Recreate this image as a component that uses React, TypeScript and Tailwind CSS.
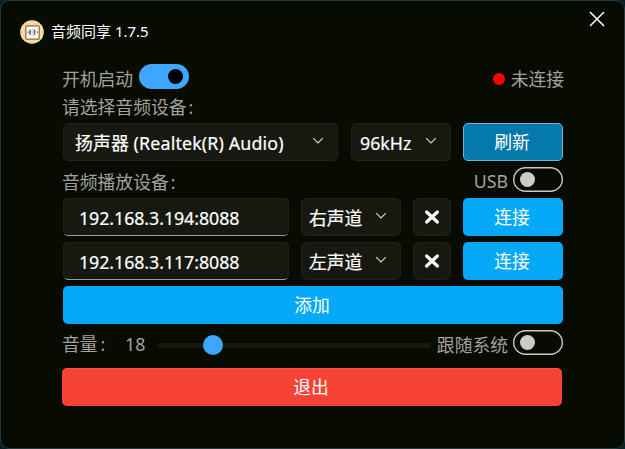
import React from "react";

function Chevron({ className = "" }: { className?: string }) {
  return (
    <svg className={`shrink-0 ${className}`} width="12" height="8" viewBox="0 0 12 8" fill="none" stroke="#d4d4d0" strokeWidth="1.2">
      <path d="M1.2 1.2 L6 6 L10.8 1.2" />
    </svg>
  );
}

function Toggle({ on = false }: { on?: boolean }) {
  return on ? (
    <div className="flex h-[25px] w-[50px] shrink-0 items-center justify-end rounded-full bg-[#3ea6ff] pr-1.5">
      <div className="size-[15px] rounded-full bg-black" />
    </div>
  ) : (
    <div className="flex h-[25px] w-[50px] shrink-0 items-center rounded-full pl-[7px] shadow-[inset_0_0_0_1.4px_#c9c9c6]">
      <div className="size-[15px] rounded-full bg-[#cbcbc9]" />
    </div>
  );
}

function Select({ label, className }: { label: string; className: string }) {
  return (
    <div className={`flex h-[38px] shrink-0 justify-between rounded-[5px] border border-[#1f211a] bg-[#171911] pt-[7px] text-white [-webkit-text-stroke:0.2px_white] ${className}`}>
      <span className="whitespace-nowrap leading-6">{label}</span>
      <Chevron className="mt-[6px]" />
    </div>
  );
}

function Device({ address, channel }: { address: string; channel: string }) {
  return (
    <div className="mb-1.5 flex h-[38px]">
      <div className="h-[38px] w-[226px] rounded-[5px] border border-[#1f211a] border-b-[#9a9c95] bg-[#171911] pl-[15px] pt-[7px] leading-6 tracking-[-0.06px] text-white [-webkit-text-stroke:0.2px_white]">
        {address}
      </div>
      <Select label={channel} className="ml-3 w-[100px] pl-[7px] pr-[13px]" />
      <div className="ml-3 flex h-[38px] w-[38px] items-center justify-center rounded-[5px] border border-[#1f211a] bg-[#171911]">
        <svg width="16" height="16" viewBox="0 0 16 16" stroke="white" strokeWidth="3.2" strokeLinecap="round">
          <path d="M2.6 3 L13.4 13 M13.4 3 L2.6 13" />
        </svg>
      </div>
      <div className="ml-3 flex h-[38px] w-[100px] items-center justify-center rounded-[5px] bg-[#05a9f7] pr-0.5 text-white">连接</div>
    </div>
  );
}

export default function App() {
  return (
    <div className="h-[449px] w-[625px] overflow-hidden bg-[#00222e]">
      <div className="flex h-[449px] w-[625px] flex-col rounded-[9px] border border-[#26383a] bg-[#080b02] font-['Noto_Sans','Noto_Sans_CJK_SC',sans-serif] text-[17.8px] text-[#a1a19d]">
        <header className="flex h-[62px] shrink-0 justify-between pl-[19px] pr-[19px]">
          <div className="flex h-[62px] items-center gap-[7px] text-[15px] text-white">
            <svg width="24" height="24" viewBox="0 0 24 24">
              <circle cx="12" cy="12" r="11.8" fill="#fcd99b" />
              <rect x="5.8" y="5.8" width="13.4" height="13.4" rx="1" fill="#fffaf0" stroke="#66755f" strokeWidth="1.2" />
              <path d="M7.5 12.3h1M10 9.8v5M14.5 9.8v5M17 12.3h1" stroke="#5c6265" strokeWidth="1.6" />
              <path d="M12.2 8.5v7.5" stroke="#aaa" strokeWidth=".6" />
            </svg>
            <span className="-mt-px">音频同享 1.7.5</span>
          </div>
          <svg className="mt-[10px]" width="16" height="16" viewBox="0 0 16 16" stroke="white" strokeWidth="1.5">
            <path d="M1 1 L15 15 M15 1 L1 15" />
          </svg>
        </header>
        <main className="ml-[62px] w-[500px]">
          <div className="mt-px flex h-[25px] items-center">
            <span className="-ml-px mr-1.5 w-[71px] whitespace-nowrap pt-1.5">开机启动</span>
            <Toggle on />
            <span className="ml-auto mr-1.5 mt-[5px] size-3 rounded-full bg-[#ff0000]" />
            <span className="-mr-px pt-1.5">未连接</span>
          </div>
          <div className="-ml-px h-[34px] pt-[6px] leading-6">请选择音频设备<span className="ml-0.5">:</span></div>
          <div className="flex">
            <Select label="扬声器 (Realtek(R) Audio)" className="w-[275px] pl-[11px] pr-[13px] tracking-[0.16px]" />
            <Select label="96kHz" className="ml-[13px] w-[100px] pl-2 pr-[13px]" />
            <div className="ml-3 flex h-[38px] w-[100px] items-center justify-center rounded-[5px] border border-[#74b4cf] bg-[#0679ab] pr-0.5 text-white">刷新</div>
          </div>
          <div className="my-1.5 flex h-[25px] items-center">
            <span className="-ml-px pt-1.5">音频播放设备<span className="ml-0.5">:</span></span>
            <span className="ml-auto mr-[5px] pt-1">USB</span>
            <Toggle />
          </div>
          <Device address="192.168.3.194:8088" channel="右声道" />
          <Device address="192.168.3.117:8088" channel="左声道" />
          <div className="flex h-[38px] items-center justify-center rounded-[5px] bg-[#05a9f7] pr-0.5 text-white">添加</div>
          <div className="mt-1.5 flex h-[25px] items-center">
            <span className="-ml-px w-[63px] pt-1">音量<span className="ml-[3px]">:</span></span>
            <span className="w-8 pt-1">18</span>
            <div className="relative mt-[5px] h-[5px] w-[274px] rounded-full bg-[#171911]">
              <div className="absolute left-[46px] top-[-8px] size-5 rounded-full bg-[#3ea6ff]" />
            </div>
            <span className="ml-auto mr-[5px] whitespace-nowrap pt-1.5">跟随系统</span>
            <Toggle />
          </div>
          <div className="-ml-px mt-[13px] flex h-[38px] w-[500px] items-center justify-center rounded-[5px] border-t border-[#f85448] bg-[#f64336] pr-0.5 text-white">退出</div>
        </main>
      </div>
    </div>
  );
}
